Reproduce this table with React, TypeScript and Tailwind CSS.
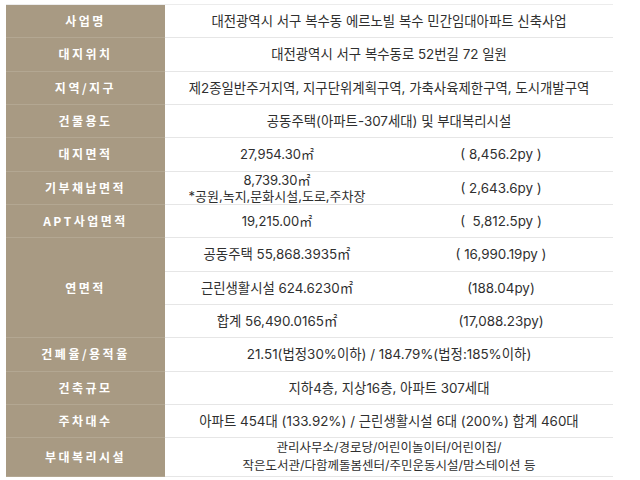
const FONT = "font-['Inter','Noto_Sans_CJK_KR',sans-serif]";
const LABEL_FONT = "font-['Noto_Sans_CJK_KR','Noto_Sans',sans-serif]";

type Row = {
  label: string;
  value?: string;
  left?: string[];
  right?: string;
  lines?: string[];
  h?: string;
};

const rows: Row[] = [
  { label: "사업명", value: "대전광역시 서구 복수동 에르노빌 복수 민간임대아파트 신축사업" },
  { label: "대지위치", value: "대전광역시 서구 복수동로 52번길 72 일원" },
  { label: "지역/지구", value: "제2종일반주거지역, 지구단위계획구역, 가축사육제한구역, 도시개발구역" },
  { label: "건물용도", value: "공동주택(아파트-307세대) 및 부대복리시설" },
  { label: "대지면적", left: ["27,954.30㎡"], right: "( 8,456.2py )" },
  { label: "기부채납면적", left: ["8,739.30㎡", "*공원,녹지,문화시설,도로,주차장"], right: "( 2,643.6py )" },
  { label: "APT사업면적", left: ["19,215.00㎡"], right: "(  5,812.5py )" },
];

const floorArea = [
  { left: "공동주택 55,868.3935㎡", right: "( 16,990.19py )" },
  { left: "근린생활시설 624.6230㎡", right: "(188.04py)" },
  { left: "합계 56,490.0165㎡", right: "(17,088.23py)" },
];

const rowsAfter: Row[] = [
  { label: "건폐율/용적율", value: "21.51(법정30%이하) / 184.79%(법정:185%이하)" },
  { label: "건축규모", value: "지하4층, 지상16층, 아파트 307세대" },
  { label: "주차대수", value: "아파트 454대 (133.92%) / 근린생활시설 6대 (200%) 합계 460대" },
  {
    label: "부대복리시설",
    lines: ["관리사무소/경로당/어린이놀이터/어린이집/", "작은도서관/다함께돌봄센터/주민운동시설/맘스테이션 등"],
    h: "h-[39px]",
  },
];

function Label({ text }: { text: string }) {
  return (
    <div
      className={`flex w-[159px] shrink-0 items-center justify-center border-b border-[#b3a792] bg-[#a89a83] text-[12px] font-bold tracking-[2.5px] text-white ${LABEL_FONT}`}
    >
      {text}
    </div>
  );
}

function Value({ row }: { row: Row }) {
  if (row.left) {
    return (
      <div className="grid flex-1 grid-cols-2 border-b border-[#e6e6e6]">
        <div className="flex flex-col items-center justify-center text-[13px] leading-[16px]">
          {row.left.map((l) => (
            <span key={l} className="whitespace-pre">{l}</span>
          ))}
        </div>
        <div className="flex items-center justify-center whitespace-pre">{row.right}</div>
      </div>
    );
  }
  if (row.lines) {
    return (
      <div className="flex flex-1 flex-col items-center justify-center border-b border-[#e6e6e6] text-[12.5px] leading-[18px]">
        {row.lines.map((l) => (
          <span key={l}>{l}</span>
        ))}
      </div>
    );
  }
  return (
    <div className="flex flex-1 items-center justify-center border-b border-[#e6e6e6]">{row.value}</div>
  );
}

function TableRow({ row }: { row: Row }) {
  const h = row.h ?? "h-[33.33px]";
  return (
    <div className={`flex ${h}`}>
      <Label text={row.label} />
      <Value row={row} />
    </div>
  );
}

export default function App() {
  return (
    <div className={`h-[480px] w-[640px] bg-white pl-[6px] pt-[4px] ${FONT}`}>
      <div className="w-[607px] border-t border-[#ececec] text-[13.4px] text-[#2f2f2f]">
        {rows.map((r) => (
          <TableRow key={r.label} row={r} />
        ))}
        <div className="flex h-[100px]">
          <Label text="연면적" />
          <div className="flex flex-1 flex-col">
            {floorArea.map((f) => (
              <div key={f.left} className="grid h-[33.33px] grid-cols-2 border-b border-[#e6e6e6]">
                <div className="flex items-center justify-center">{f.left}</div>
                <div className="flex items-center justify-center whitespace-pre">{f.right}</div>
              </div>
            ))}
          </div>
        </div>
        {rowsAfter.map((r) => (
          <TableRow key={r.label} row={r} />
        ))}
      </div>
    </div>
  );
}
